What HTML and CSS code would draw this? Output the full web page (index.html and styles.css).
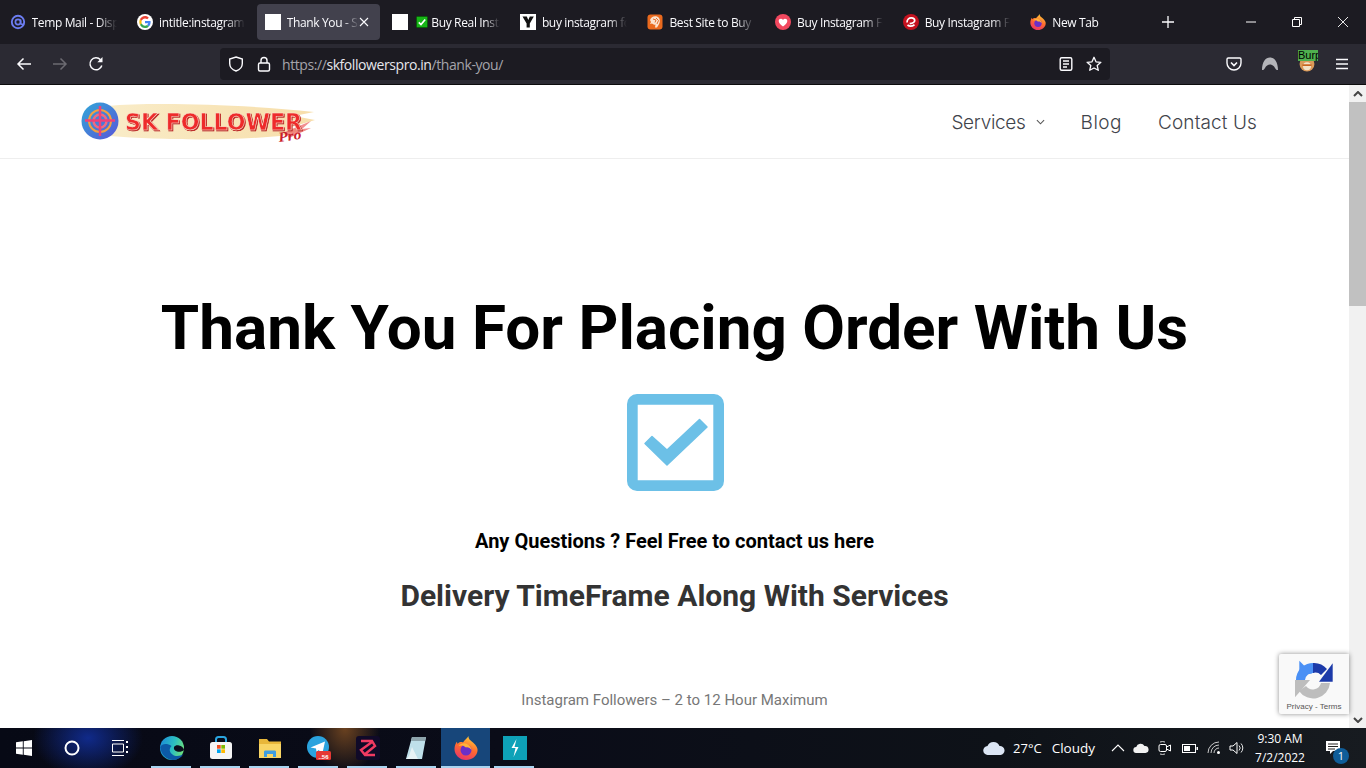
FILE: index.html
```html
<!DOCTYPE html>
<html lang="en">
<head>
<meta charset="utf-8">
<title>Thank You - SK Followers Pro</title>
<link rel="stylesheet" href="styles.css">
</head>
<body>
<div class="tabstrip">
  <div class="tab"><svg class="fav" viewBox="0 0 16 16"><circle cx="8" cy="8" r="6.2" fill="none" stroke="#6b7cf0" stroke-width="1.9"/><circle cx="8" cy="8" r="2.6" fill="none" stroke="#6b7cf0" stroke-width="1.7"/><path d="M10.6 5.5v3.6c0 1.7 2.6 1.7 3.4.2" fill="none" stroke="#6b7cf0" stroke-width="1.6"/></svg><span class="tab-label">Temp Mail - Disposable</span></div>
  <div class="tab"><svg class="fav" viewBox="0 0 16 16"><circle cx="8" cy="8" r="8" fill="#fff"/><path d="M13.6 8.2c0-.4 0-.8-.1-1.2H8v2.3h3.2c-.1.8-.6 1.4-1.2 1.8l1.8 1.4c1.1-1 1.8-2.5 1.8-4.3z" fill="#4285f4"/><path d="M8 14c1.6 0 2.9-.5 3.8-1.5L10 11.1c-.5.3-1.2.6-2 .6-1.5 0-2.8-1-3.3-2.4L2.9 10.700C3.900 12.700 5.800 14 8 14z" fill="#34a853"/><path d="M4.700 9.300C4.400 8.500 4.400 7.500 4.700 6.700L2.900 5.300c-.8 1.600-.8 3.800 0 5.400z" fill="#fbbc05"/><path d="M8 4.400c.9 0 1.600.3 2.200.9l1.600-1.600C10.900 2.600 9.600 2 8 2 5.800 2 3.900 3.300 2.900 5.300l1.800 1.400C5.200 5.400 6.500 4.400 8 4.400z" fill="#ea4335"/></svg><span class="tab-label">intitle:instagram followers</span></div>
  <div class="tab tab-active"><span class="fav fav-blank"></span><span class="tab-label tab-label-short">Thank You - SK Followers</span><svg class="tab-close" viewBox="0 0 10 10"><path d="M1 1l8 8M9 1l-8 8" stroke="#fbfbfe" stroke-width="1.100"/></svg></div>
  <div class="tab"><span class="fav fav-blank"></span><svg class="check-emoji" viewBox="0 0 12 12"><rect x=".5" y=".5" width="11" height="11" rx="1" fill="#17b517" stroke="#0a5f0a"/><path d="M2.800 6.300l2.200 2.200 4.200-5" fill="none" stroke="#fff" stroke-width="1.700"/></svg><span class="tab-label tab-label-tight">Buy Real Instagram</span></div>
  <div class="tab"><svg class="fav" viewBox="0 0 16 16"><rect width="16" height="16" fill="#fff"/><path d="M2.500 2.500h4.300L8.300 6l1.500-3.500h4L9.800 9.500v4H6.600v-4z" fill="#111"/></svg><span class="tab-label">buy instagram followers</span></div>
  <div class="tab"><svg class="fav" viewBox="0 0 16 16"><rect x=".5" y=".5" width="15" height="15" rx="3" fill="#ea6a1e"/><path d="M3 6c1-3 4-4.500 7-3.500 2.500 1 3.500 4 2.500 6.500-.6 1.600-1.500 3-2.500 4.500H8l.5-3c-1.500.5-2.500 0-3.500-1l-2 .5 1-2z" fill="#fbe3cf"/><path d="M6 5l3 1-1 2.500M9 4l2.500 2.500L10 10" fill="none" stroke="#e0611a" stroke-width=".9"/></svg><span class="tab-label">Best Site to Buy Instagram</span></div>
  <div class="tab"><svg class="fav" viewBox="0 0 16 16"><circle cx="8" cy="8" r="8" fill="#f1485f"/><path d="M8 12.600C5 10.300 3.700 8.800 3.700 7c0-1.400 1-2.300 2.200-2.300.9 0 1.600.4 2.100 1.200.5-.8 1.200-1.200 2.100-1.200 1.200 0 2.200.9 2.200 2.300 0 1.800-1.300 3.300-4.300 5.600z" fill="#fff"/></svg><span class="tab-label">Buy Instagram Followers</span></div>
  <div class="tab"><svg class="fav" viewBox="0 0 16 16"><circle cx="8" cy="8" r="8" fill="#c5121f"/><path d="M4 8.500C4 5.500 6 3.800 8.300 3.800c2 0 3.400 1.100 3.400 2.700 0 2-2.300 2.800-5 3.200M4.500 11c1.500 1.300 4.500 1.500 7-.2" fill="none" stroke="#fff" stroke-width="1.700"/></svg><span class="tab-label">Buy Instagram Followers</span></div>
  <div class="tab"><svg class="fav" viewBox="0 0 24 24"><use href="#firefox-mark"/></svg><span class="tab-label">New Tab</span></div>
  <div class="new-tab"><svg class="ic14" viewBox="0 0 14 14"><path d="M7 1v12M1 7h12" stroke="#fbfbfe" stroke-width="1.300"/></svg></div>
  <div class="win-controls">
    <div class="win-btn"><svg class="ic10" viewBox="0 0 10 10"><path d="M0 5h10" stroke="#fff"/></svg></div>
    <div class="win-btn"><svg class="ic10" viewBox="0 0 10 10"><path d="M.5 2.500h7v7h-7zM2.500 2.500v-2h7v7h-2" fill="none" stroke="#fff"/></svg></div>
    <div class="win-btn"><svg class="ic10" viewBox="0 0 10 10"><path d="M0 0l10 10M10 0L0 10" stroke="#fff" stroke-width=".9"/></svg></div>
  </div>
</div>

<div class="toolbar">
  <div class="nav-buttons">
    <svg class="ic16" viewBox="0 0 16 16"><path d="M15 8H2M7.500 2.500L2 8l5.500 5.500" fill="none" stroke="#fbfbfe" stroke-width="1.500"/></svg>
    <svg class="ic16" viewBox="0 0 16 16"><path d="M1 8h13M8.500 2.500L14 8l-5.500 5.500" fill="none" stroke="#6c6b72" stroke-width="1.500"/></svg>
    <svg class="ic16" viewBox="0 0 16 16"><path d="M13.800 9.500A6 6 0 1 1 12.500 3.800" fill="none" stroke="#fbfbfe" stroke-width="1.500"/><path d="M14.500 1v5.200H9.300z" fill="#fbfbfe"/></svg>
  </div>
  <div class="urlbar">
    <svg class="ic16 shield" viewBox="0 0 16 16"><path d="M8 1l6.300 2v4.500c0 3.700-2.700 6.300-6.300 7.500-3.600-1.200-6.300-3.800-6.300-7.500V3z" fill="none" stroke="#fbfbfe" stroke-width="1.400"/></svg>
    <svg class="ic16 lock" viewBox="0 0 16 16"><rect x="2.500" y="7" width="11" height="8" rx="1.500" fill="none" stroke="#fbfbfe" stroke-width="1.400"/><path d="M5 7V4.500a3 3 0 0 1 6 0V7" fill="none" stroke="#fbfbfe" stroke-width="1.400"/></svg>
    <span class="url"><span class="url-dim">https://</span>skfollowerspro.in<span class="url-dim">/thank-you/</span></span>
    <svg class="ic16 reader" viewBox="0 0 16 16"><rect x="2.200" y="1.700" width="11.600" height="12.600" rx="1.500" fill="none" stroke="#fbfbfe" stroke-width="1.400"/><path d="M5 5h6M5 8h6M5 11h4" stroke="#fbfbfe" stroke-width="1.300"/></svg>
    <svg class="ic16" viewBox="0 0 16 16"><path d="M8 1.300l2 4.500 4.900.5-3.700 3.200 1.100 4.800L8 12l-4.300 2.300 1.100-4.800L1.100 6.300 6 5.800z" fill="none" stroke="#fbfbfe" stroke-width="1.300" stroke-linejoin="round"/></svg>
  </div>
  <div class="tool-icons">
    <svg class="ic16" viewBox="0 0 16 16"><path d="M2.300 2h11.400c.7 0 1.300.6 1.300 1.300V7c0 4-3.200 7-7 7s-7-3-7-7V3.300C1 2.600 1.600 2 2.300 2z" fill="none" stroke="#fbfbfe" stroke-width="1.400"/><path d="M5 6.500l3 3 3-3" fill="none" stroke="#fbfbfe" stroke-width="1.600"/></svg>
    <svg class="ic18 avatar" viewBox="0 0 18 18"><path d="M1 15C1 7 4.500 2.500 9 2.500S17 7 17 15c-1.500 0-2-.2-3-2-1-2.200-3-3.500-5-3.500S5 10.800 4 13c-1 1.800-1.500 2-3 2z" fill="#b5b5ba"/></svg>
    <div class="burp"><svg class="burp-face" viewBox="0 0 14 14"><circle cx="7" cy="7" r="6.500" fill="#d99a5a"/><circle cx="7" cy="9" r="3.500" fill="#f3e2c7"/><path d="M3 8h8" stroke="#c8641e" stroke-width="1.500"/></svg><span class="burp-tag">Burp</span></div>
    <svg class="ic16" viewBox="0 0 16 16"><path d="M2 3.500h12M2 8h12M2 12.500h12" stroke="#fbfbfe" stroke-width="1.400"/></svg>
  </div>
</div>

<div class="viewport">
  <main class="page">
    <header class="site-header">
      <svg class="logo" viewBox="0 0 240 44" role="img" aria-label="SK Follower Pro">
        <defs>
          <linearGradient id="lg1" x1="0" y1="0" x2="1" y2="1"><stop offset="0" stop-color="#30a8d8"/><stop offset="1" stop-color="#5a55d8"/></linearGradient>
          <linearGradient id="lg2" x1="0" y1="0" x2="1" y2="0"><stop offset="0" stop-color="#f9ecc8"/><stop offset="1" stop-color="#f7deaa"/></linearGradient>
        </defs>
        <path d="M28 6 C70 2 160 4 234 12 L214 16 L235 20 L208 28 L226 30 L200 36 C150 41 80 40 30 36z" fill="url(#lg2)"/>
        <path d="M205 32l26-11-9 8 9-1-22 10z" fill="#ee6a6a" opacity=".75"/>
        <circle cx="20" cy="21" r="18.500" fill="url(#lg1)"/>
        <circle cx="20" cy="21" r="11" fill="none" stroke="#f4a040" stroke-width="2"/>
        <circle cx="20" cy="21" r="6.500" fill="none" stroke="#f06a80" stroke-width="2.500"/>
        <path d="M5 20.500h30M20 6v30" stroke="#f0407a" stroke-width="2.500"/>
        <text class="logo-text" x="45" y="30" textLength="177" lengthAdjust="spacingAndGlyphs">SK FOLLOWER</text>
        <text class="logo-pro" x="0" y="0" transform="translate(199 42) rotate(-8)" textLength="23" lengthAdjust="spacingAndGlyphs">Pro</text>
      </svg>
      <nav class="site-nav">
        <a class="nav-link nav-services">Services <svg class="chev" viewBox="0 0 10 6"><path d="M1 1l4 4 4-4" fill="none" stroke="#555" stroke-width="1.200"/></svg></a>
        <a class="nav-link nav-blog">Blog</a>
        <a class="nav-link nav-contact">Contact Us</a>
      </nav>
    </header>
    <section class="content">
      <h1 class="title">Thank You For Placing Order With Us</h1>
      <svg class="done" viewBox="0 0 97 97"><path fill-rule="evenodd" d="M10 0h77a10 10 0 0 1 10 10v77a10 10 0 0 1-10 10H10A10 10 0 0 1 0 87V10A10 10 0 0 1 10 0zM10.700 10.700v75.600h75.600V10.700z" fill="#6cc0e7"/><path d="M25 42.500L18 49.500 40 71 80 33 72.500 25.500 40 56z" fill="#6cc0e7" stroke="#6cc0e7" stroke-width="1.500" stroke-linejoin="round"/></svg>
      <p class="questions">Any Questions ? Feel Free to contact us here</p>
      <h2 class="subtitle">Delivery TimeFrame Along With Services</h2>
      <p class="service-line">Instagram Followers – 2 to 12 Hour Maximum</p>
    </section>
  </main>
  <aside class="scrollbar">
    <svg class="scroll-arrow" viewBox="0 0 10 6"><path d="M1 5l4-4 4 4" fill="none" stroke="#444" stroke-width="2"/></svg>
    <div class="scroll-track"><div class="scroll-thumb"></div></div>
    <svg class="scroll-arrow" viewBox="0 0 10 6"><path d="M1 1l4 4 4-4" fill="none" stroke="#444" stroke-width="2"/></svg>
  </aside>
  <div class="recaptcha">
    <svg class="recaptcha-logo" viewBox="0 0 40 40">
      <path d="M36 23A17 17 0 0 1 5 31L12 26A8.500 8.500 0 0 0 27 23z" fill="#bdbdbd"/>
      <path d="M1 37.300V20H16z" fill="#bdbdbd"/>
      <path d="M20 3A17 17 0 0 0 2 20H11A8 8 0 0 1 20 13z" fill="#4a90f5"/>
      <path d="M5.300 .7L18 13.500 5.300 15z" fill="#4a90f5"/>
      <path d="M19 3A17 17 0 0 1 33 9L27 15A8 8 0 0 0 19 13z" fill="#1c3aa9"/>
      <path d="M38.700 3.300V21.700H25z" fill="#1c3aa9"/>
    </svg>
    <span class="recaptcha-text">Privacy - Terms</span>
  </div>
</div>

<footer class="taskbar">
  <div class="task-left">
    <div class="tb-cell"><svg class="ic16" viewBox="0 0 16 16"><path d="M0 2.300L6.800 1.300v6.200H0zM7.700 1.200L16 0v7.500H7.700zM0 8.400h6.800v6.300L0 13.700zM7.700 8.400H16V16l-8.300-1.200z" fill="#fff"/></svg></div>
    <div class="tb-cell"><svg class="ic16" viewBox="0 0 16 16"><circle cx="8" cy="8" r="6.500" fill="none" stroke="#fff" stroke-width="2"/></svg></div>
    <div class="tb-cell"><svg class="ic16" viewBox="0 0 16 16"><path d="M0 .5h12M0 15.500h12M.5 4h11v8H.5z" fill="none" stroke="#fff"/><path d="M14 1h2v2h-2zM14 6h2v2h-2zM14 11h2v2h-2z" fill="#fff"/></svg></div>
  </div>
  <div class="task-apps">
    <div class="tb-app"><svg class="ic24" viewBox="0 0 24 24"><defs><linearGradient id="edge" x1="0" y1=".3" x2="1" y2=".6"><stop offset="0" stop-color="#1c8fd8"/><stop offset=".55" stop-color="#2cc0c0"/><stop offset="1" stop-color="#6fe07a"/></linearGradient></defs><circle cx="12" cy="12" r="12" fill="url(#edge)"/><path d="M.2 11C1 19 7 24 13 24c4 0 8-2 10.500-6-3 2-8 3-11 .5C9 16 9 12.500 11.500 10 7 7 2 7.500.2 11z" fill="#0c5aa6"/><path d="M24 14c-1.500 1.500-4.500 2.200-7 1.500-2.500-.8-3.500-2.500-3-4.500 1-1.500 3-2 5-1.500 2.500.5 4.500 2 5 4.500z" fill="#0a0e1c"/></svg></div>
    <div class="tb-app"><svg class="ic24" viewBox="0 0 24 24"><path d="M7 7V3.500C7 2 8 1 9.500 1h5C16 1 17 2 17 3.500V7" fill="none" stroke="#2aa5e0" stroke-width="2"/><rect x="1" y="6" width="22" height="17" rx="2.500" fill="#f5f5f5"/><path d="M8 9h3.700v3.700H8z" fill="#f25022"/><path d="M12.300 9H16v3.700h-3.700z" fill="#7fba00"/><path d="M8 13.300h3.700V17H8z" fill="#00a4ef"/><path d="M12.300 13.300H16V17h-3.700z" fill="#ffb900"/></svg></div>
    <div class="tb-app"><svg class="ic24" viewBox="0 0 24 24"><path d="M1 3h8l2 2.500h12V22H1z" fill="#e8b73a"/><path d="M1 8h22v14H1z" fill="#f8d565"/><path d="M6 21v-5c0-1 .5-1.500 1.500-1.500h9c1 0 1.500.5 1.500 1.500v5h-3v-3H9v3z" fill="#3f9de0"/></svg></div>
    <div class="tb-app"><svg class="ic24" viewBox="0 0 24 24"><circle cx="11" cy="11" r="11" fill="#2aa3de"/><path d="M3.500 11.500L18 5.500 15.500 17l-4-3-2 2-.5-3.500z" fill="#fff"/><rect class="tg-badge" x="9" y="15" width="15" height="9" rx="1.500" fill="#e53935"/><text class="tg-count" x="16.500" y="22.500">..56</text></svg></div>
    <div class="tb-app"><svg class="ic24" viewBox="0 0 24 24"><rect width="24" height="24" rx="3" fill="#100a28"/><path d="M5 5h11l3 5-11 9M19 19H9l-4-5 11-8" fill="none" stroke="#f23a62" stroke-width="2.400"/></svg></div>
    <div class="tb-app"><svg class="ic24" viewBox="0 0 24 24"><path d="M7 1h14l-4 22H1z" fill="#bfe0ea"/><path d="M7 1h14l-1 4H6z" fill="#8ea5ad"/><path d="M4 20l3-9 6 12H1z" fill="#e7f2f5"/></svg></div>
    <div class="tb-app tb-app-active"><svg class="ic24" viewBox="0 0 24 24"><use href="#firefox-mark"/></svg></div>
    <div class="tb-app"><svg class="ic24" viewBox="0 0 24 24"><rect width="24" height="24" fill="#0ea2b8"/><path d="M13.500 3L8.500 12h4l-2 9 5-10h-4z" fill="#fff"/></svg></div>
  </div>
  <div class="tray">
    <svg class="tray-cloud" viewBox="0 0 22 14"><path d="M5 14a4.500 4.500 0 0 1-.5-9A6.500 6.500 0 0 1 16.500 5 4.500 4.500 0 0 1 17.500 14z" fill="#dce6f4"/></svg>
    <span class="weather-temp">27°C</span>
    <span class="weather-text">Cloudy</span>
    <svg class="tray-ic chevron-up" viewBox="0 0 14 8"><path d="M1 7l6-6 6 6" fill="none" stroke="#fff" stroke-width="1.100"/></svg>
    <svg class="tray-ic onedrive" viewBox="0 0 16 10"><path d="M3.500 10a3 3 0 0 1-.3-6A4.500 4.500 0 0 1 11.500 3 3.500 3.500 0 0 1 12.500 10z" fill="#f2f2f2"/></svg>
    <svg class="tray-ic meet" viewBox="0 0 14 16"><rect x="1" y="4.500" width="7.500" height="7" rx="1.500" fill="none" stroke="#fff"/><path d="M8.500 7l4-2v6l-4-2" fill="none" stroke="#fff"/><path d="M2 2a7 7 0 0 1 5 0M2 14a7 7 0 0 0 5 0" fill="none" stroke="#fff" stroke-width=".8"/></svg>
    <svg class="tray-ic battery" viewBox="0 0 16 9"><rect x=".5" y=".5" width="13" height="8" fill="none" stroke="#fff"/><rect x="2" y="2" width="6" height="5" fill="#fff"/><path d="M14.500 3h1.500v3h-1.500z" fill="#fff"/></svg>
    <svg class="tray-ic wifi" viewBox="0 0 14 14"><path d="M1 12a11 11 0 0 1 11-11M4 12a8 8 0 0 1 8-8M7 12a5 5 0 0 1 5-5" fill="none" stroke="#ddd" stroke-width=".9"/><circle cx="11.500" cy="11.500" r="1.500" fill="#fff"/></svg>
    <svg class="tray-ic volume" viewBox="0 0 15 14"><path d="M1 5h3l4-3.500v11L4 9H1z" fill="none" stroke="#fff"/><path d="M10 4.500a3.500 3.500 0 0 1 0 5M12 2.500a6.500 6.500 0 0 1 0 9" fill="none" stroke="#fff" stroke-width=".9"/></svg>
    <div class="clock"><span>9:30 AM</span><span>7/2/2022</span></div>
    <div class="notif"><svg class="ic16" viewBox="0 0 16 16"><path d="M1 1h14v10h-7l-3 3v-3H1z" fill="#fff"/><path d="M3 4h10M3 6.500h10M3 9h7" stroke="#222" /></svg><span class="notif-badge">1</span></div>
  </div>
</footer>

<svg class="symbols" aria-hidden="true">
  <defs>
    <linearGradient id="ffg" x1=".7" y1="0" x2=".3" y2="1"><stop offset="0" stop-color="#ffd23a"/><stop offset=".5" stop-color="#ff6a2f"/><stop offset="1" stop-color="#e8336b"/></linearGradient>
    <symbol id="firefox-mark" viewBox="0 0 24 24">
      <path d="M14.500 0c-.3 3 2 4.500 4.500 6.500 3.500 3 5 6 4.500 8.500C23 20 18 24 12 24 5.500 24 .5 19 .5 13c0-3 1-5.500 2.300-7.300l.9 2.300C5 6 7 5.500 9 6.500c1.500-2.500 4-4 5.500-6.500z" fill="url(#ffg)"/>
      <circle cx="12" cy="14" r="5.500" fill="#6a2fc8"/>
      <path d="M4.500 10c2-2.500 6-3.500 8.500-2 3 1.500 4.500 4 4.500 6-1.500-2-3.500-3-5.500-2.500C9.500 9 7 9 4.500 10z" fill="#ffb43a"/>
    </symbol>
  </defs>
</svg>
</body>
</html>
```

FILE: styles.css
```css
* { box-sizing: border-box; }
html, body { margin: 0; height: 100%; }
body {
  display: flex;
  flex-direction: column;
  height: 100vh;
  overflow: hidden;
  background: #fff;
  font-family: "Roboto", "Liberation Sans", sans-serif;
}
svg { display: block; flex: none; }
.symbols { width: 0; height: 0; position: absolute; }
.ic10 { width: 10px; height: 10px; }
.ic14 { width: 14px; height: 14px; }
.ic16 { width: 16px; height: 16px; }
.ic18 { width: 18px; height: 18px; }
.ic24 { width: 24px; height: 24px; }

/* Browser chrome */
.tabstrip {
  height: 44px;
  flex: none;
  display: flex;
  align-items: flex-start;
  gap: 4px;
  padding: 4px 0 0 1.500px;
  background: #1c1b22;
  font-family: "Open Sans", "Noto Sans", sans-serif;
  font-size: 12px;
  color: #fbfbfe;
}
.tab {
  width: 123.600px;
  height: 36px;
  flex: none;
  display: flex;
  align-items: center;
  padding: 0 8px;
  border-radius: 4px;
  overflow: hidden;
}
.tab-active { background: #42414d; }
.fav { width: 16px; height: 16px; flex: none; }
.fav-blank { background: #fff; display: block; }
.tab-label {
  margin-left: 6px;
  flex: 1;
  min-width: 0;
  white-space: nowrap;
  overflow: hidden;
  letter-spacing: -.35px;
  -webkit-mask-image: linear-gradient(90deg, #000 78%, transparent 100%);
  mask-image: linear-gradient(90deg, #000 78%, transparent 100%);
}
.tab-label-short { flex: 1; }
.tab-label-tight { margin-left: 3px; }
.check-emoji { width: 12px; height: 12px; margin-left: 8px; }
.tab-close { width: 10px; height: 10px; margin-right: 3px; flex: none; }
.new-tab { margin-left: 11px; margin-top: 11px; }
.win-controls { margin-left: auto; display: flex; margin-top: -4px; }
.win-btn { width: 46px; height: 44px; display: flex; align-items: center; justify-content: center; }

.toolbar {
  height: 41px;
  flex: none;
  display: flex;
  align-items: center;
  background: #2b2a33;
  border-bottom: 1px solid #0c0c0d;
  padding: 0 16px 0 16px;
}
.nav-buttons { display: flex; gap: 20px; width: 204px; }
.urlbar {
  width: 890px;
  height: 32px;
  display: flex;
  align-items: center;
  background: #1c1b22;
  border-radius: 4px;
  padding: 0 8px;
  font-family: "Open Sans", "Noto Sans", sans-serif;
  font-size: 14px;
  color: #e6e6ec;
}
.lock { margin-left: 12px; }
.url { margin-left: 10px; flex: 1; letter-spacing: -.42px; }
.url-dim { color: #a5a4ab; }
.reader { margin-right: 12px; }
.tool-icons { margin-left: auto; display: flex; align-items: center; gap: 20px; }
.avatar { margin: 0 -1px; }
.burp { position: relative; width: 16px; height: 20px; }
.burp-face { width: 16px; height: 16px; position: absolute; left: 1px; top: 2px; }
.burp-tag {
  position: absolute;
  left: 0;
  top: -4px;
  width: 20px;
  height: 11px;
  overflow: hidden;
  background: #4fb04f;
  color: #000;
  font: 11px/11px "Liberation Sans", sans-serif;
  white-space: nowrap;
}

/* Page */
.viewport { flex: 1; min-height: 0; display: flex; position: relative; }
.page { flex: 1; min-width: 0; overflow: hidden; background: #fff; }
.site-header {
  height: 74px;
  display: flex;
  align-items: center;
  justify-content: space-between;
  padding: 0 92px 0 80px;
  border-bottom: 1px solid #eee;
}
.logo { width: 240px; height: 44px; }
.logo-text {
  font: 900 23px "DejaVu Sans", sans-serif;
  fill: #ee2b2b;
  stroke: #fbe4d0;
  stroke-width: .6px;
  filter: drop-shadow(1px 1px 0 #b81f1f);
}
.logo-pro { font: italic 700 14px "Liberation Serif", serif; fill: #c9202a; }
.site-nav { display: flex; gap: 36px; align-items: center; padding-top: 1px; }
.nav-link { font: 300 19px "Inter", "Open Sans", sans-serif; color: #3f444b; display: flex; align-items: center; }
.nav-services { gap: 10px; letter-spacing: -.3px; }
.nav-blog { letter-spacing: .5px; }
.nav-contact { letter-spacing: .1px; }
.chev { width: 9px; height: 6px; }

.content { display: flex; flex-direction: column; align-items: center; text-align: center; }
.title { margin: 131px 0 0; font-size: 62px; line-height: 76px; font-weight: 700; color: #000; }
.done { width: 97px; height: 97px; margin: 28px 0 0 2px; }
.questions { margin: 36px 0 0; font-size: 20px; line-height: 28px; font-weight: 700; color: #000; }
.subtitle { margin: 23px 0 0; font-size: 30px; line-height: 36px; font-weight: 700; color: #333; }
.service-line { margin: 75px 0 0; font-size: 15px; line-height: 22px; color: #777; }

.scrollbar { width: 17px; flex: none; display: flex; flex-direction: column; background: #f1f1f1; }
.scroll-arrow { width: 10px; height: 6px; margin: 6px auto 5px; }
.scroll-track { flex: 1; }
.scroll-thumb { height: 204px; background: #c1c1c1; }

.recaptcha {
  position: absolute;
  right: 17px;
  top: 569px;
  width: 70px;
  height: 60px;
  background: #f9f9f9;
  box-shadow: 0 0 5px rgba(0,0,0,.45);
  border-radius: 2px 0 0 2px;
  display: flex;
  flex-direction: column;
  align-items: center;
  padding-top: 6px;
}
.recaptcha-logo { width: 40px; height: 40px; }
.recaptcha-text { font: 8px/11px "Liberation Sans", sans-serif; color: #555; margin-top: 1px; white-space: nowrap; }

/* Taskbar */
.taskbar {
  height: 40px;
  flex: none;
  display: flex;
  align-items: stretch;
  color: #fff;
  font-family: "Open Sans", "Noto Sans", sans-serif;
  background:
    radial-gradient(ellipse 55px 40px at 88px 10px, #102a8a 0%, rgba(16,42,138,0) 100%),
    radial-gradient(ellipse 35px 45px at 345px 0, #6b4220 0%, rgba(107,66,32,0) 100%),
    linear-gradient(90deg, #070915 0, #0a0c18 500px, #0e1218 1000px, #171b20 1366px);
}
.task-left { display: flex; }
.tb-cell { width: 48px; display: flex; align-items: center; justify-content: center; }
.task-apps { display: flex; margin-left: 3px; }
.tb-app {
  width: 49px;
  display: flex;
  align-items: center;
  justify-content: center;
  position: relative;
}
.tb-app::after {
  content: "";
  position: absolute;
  left: 4px;
  right: 5px;
  bottom: 0;
  height: 2px;
  background: #a8d4f0;
}
.tb-app-active { background: #17467a; }
.tb-app-active::after { left: 0; right: 0; }
.tg-count { font: 700 6px "Liberation Sans", sans-serif; fill: #fff; text-anchor: middle; }
.tray { margin-left: auto; display: flex; align-items: center; }
.tray-cloud { width: 22px; height: 14px; }
.weather-temp { margin-left: 8px; font-size: 13px; }
.weather-text { margin-left: 10px; font-size: 13.500px; }
.tray-ic { height: 14px; }
.chevron-up { width: 14px; height: 8px; margin-left: 16px; }
.onedrive { width: 16px; height: 10px; margin-left: 8px; }
.meet { width: 14px; height: 16px; margin-left: 9px; }
.battery { width: 16px; height: 9px; margin-left: 10px; }
.wifi { width: 14px; margin-left: 9px; }
.volume { width: 15px; margin-left: 8px; }
.clock {
  margin-left: 11px;
  width: 50px;
  display: flex;
  flex-direction: column;
  align-items: center;
  font-size: 12px;
  line-height: 19px;
}
.notif { position: relative; margin-left: 20px; margin-right: 25px; }
.notif-badge {
  position: absolute;
  right: -8px;
  bottom: -8px;
  width: 16px;
  height: 16px;
  border-radius: 50%;
  background: #0f5d99;
  font-size: 11px;
  line-height: 16px;
  text-align: center;
  color: #fff;
}
```
